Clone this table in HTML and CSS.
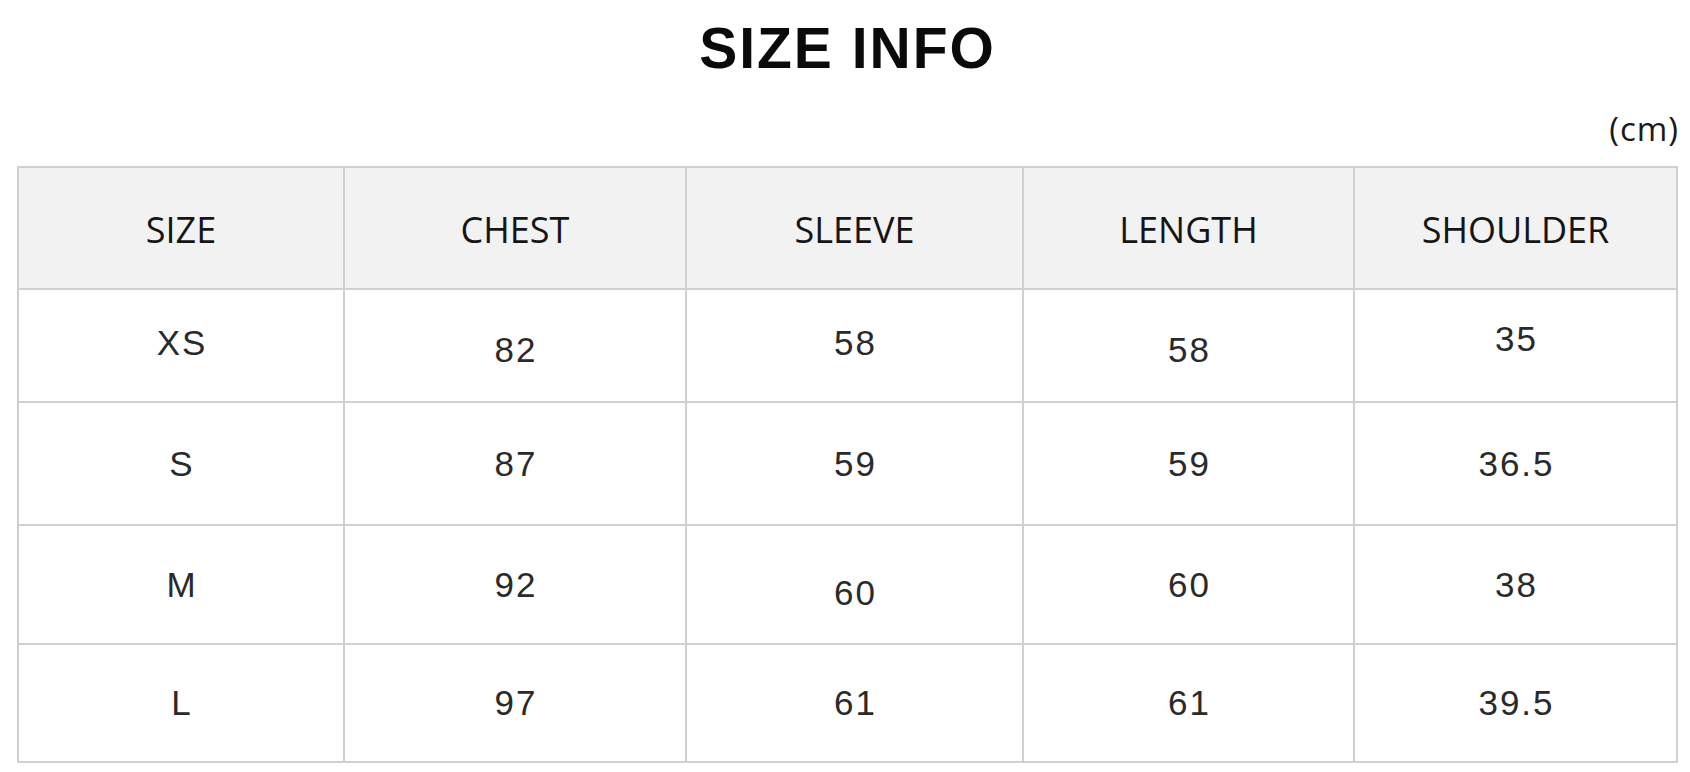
FILE: index.html
```html
<!DOCTYPE html>
<html lang="en">
<head>
<meta charset="utf-8">
<title>SIZE INFO</title>
<link rel="stylesheet" href="styles.css">
</head>
<body>
<main class="page">
  <h1 class="title">SIZE INFO</h1>
  <div class="unit">(cm)</div>
  <div class="chart">
    <div class="cell head">SIZE</div>
    <div class="cell head">CHEST</div>
    <div class="cell head">SLEEVE</div>
    <div class="cell head">LENGTH</div>
    <div class="cell head">SHOULDER</div>

    <div class="cell r1 up3">XS</div>
    <div class="cell r1 dn3">82</div>
    <div class="cell r1 up3">58</div>
    <div class="cell r1 dn4">58</div>
    <div class="cell r1 up7">35</div>

    <div class="cell r2">S</div>
    <div class="cell r2">87</div>
    <div class="cell r2">59</div>
    <div class="cell r2">59</div>
    <div class="cell r2">36.5</div>

    <div class="cell r3">M</div>
    <div class="cell r3">92</div>
    <div class="cell r3 dn8">60</div>
    <div class="cell r3">60</div>
    <div class="cell r3">38</div>

    <div class="cell r4 up1">L</div>
    <div class="cell r4 up1">97</div>
    <div class="cell r4 up1">61</div>
    <div class="cell r4 up1">61</div>
    <div class="cell r4 up1">39.5</div>
  </div>
</main>
</body>
</html>
```

FILE: styles.css
```css
html, body {
  margin: 0;
  padding: 0;
  background: #ffffff;
}

.page {
  width: 1661px;
  padding: 20px 0 0 17px;
  display: flex;
  flex-direction: column;
}

.title {
  margin: 0;
  font-family: "Liberation Sans", Arial, sans-serif;
  font-weight: 700;
  font-size: 57px;
  line-height: 57px;
  letter-spacing: 2px;
  color: #0a0a0a;
  text-align: center;
}

.unit {
  margin-top: 34px;
  align-self: flex-end;
  font-family: "Open Sans", "Noto Sans", sans-serif;
  font-size: 33px;
  line-height: 36px;
  letter-spacing: 1px;
  margin-right: -1px;
  color: #1a1a1a;
}

.chart {
  margin-top: 19px;
  display: grid;
  grid-template-columns: 326px 342px 337px 331px 323px;
  grid-template-rows: 122px 113px 123px 119px 118px;
  border-top: 2px solid #d0d0d0;
  border-left: 2px solid #d0d0d0;
}

.cell {
  box-sizing: border-box;
  border-right: 2px solid #d0d0d0;
  border-bottom: 2px solid #d0d0d0;
  display: flex;
  align-items: center;
  justify-content: center;
  font-family: "Liberation Sans", Arial, sans-serif;
  font-size: 35px;
  line-height: 35px;
  letter-spacing: 2px;
  padding-left: 2px;
  color: #2a2a2a;
  background: #ffffff;
}

.head {
  background: #f3f2f3;
  font-family: "Open Sans", "Noto Sans", sans-serif;
  font-size: 36px;
  line-height: 36px;
  letter-spacing: 0;
  padding-left: 0;
  color: #151515;
  padding-top: 4px;
}

.up1 { padding-bottom: 2px; }
.up3 { padding-bottom: 6px; }
.up7 { padding-bottom: 15px; }
.dn3 { padding-top: 7px; }
.dn4 { padding-top: 8px; }
.dn8 { padding-top: 16px; }
```
